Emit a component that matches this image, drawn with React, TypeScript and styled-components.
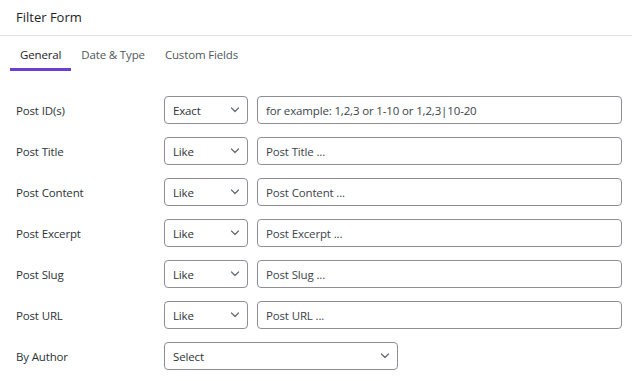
import React from "react";
import styled, { createGlobalStyle } from "styled-components";

const GlobalStyle = createGlobalStyle`
  html, body { margin: 0; padding: 0; background: #ffffff; }
  body { font-family: "Open Sans", "Noto Sans", sans-serif; color: #1d2327; }
  * { box-sizing: border-box; }
`;

const Panel = styled.div`
  width: 632px;
  background: #ffffff;
`;

const Header = styled.div`
  height: 36px;
  padding: 0 16px 2px;
  display: flex;
  align-items: center;
  border-bottom: 1px solid #e2e4e7;
  font-size: 13px;
  font-weight: 500;
  color: #1d2327;
`;

const TabBar = styled.div`
  display: flex;
  padding-left: 10px;
  height: 35px;
`;

const Tab = styled.div<{ $active?: boolean }>`
  padding: 5px 10px 0;
  display: flex;
  align-items: center;
  font-size: 11.5px;
  letter-spacing: -0.15px;
  font-weight: ${(p) => (p.$active ? 500 : 400)};
  color: ${(p) => (p.$active ? "#1d2327" : "#50575e")};
  border-bottom: 3px solid ${(p) => (p.$active ? "#6b3fd1" : "transparent")};
`;

const Form = styled.div`
  padding: 25px 10px 0 16px;
  display: flex;
  flex-direction: column;
  gap: 13px;
`;

const Row = styled.div<{ $wide?: boolean }>`
  display: grid;
  grid-template-columns: ${(p) => (p.$wide ? "148px 234px" : "148px 84px 1fr")};
  align-items: center;
  height: 28px;
`;

const Label = styled.div`
  font-size: 11.5px;
  letter-spacing: -0.15px;
  color: #2c3338;
`;

const SelectBox = styled.div`
  height: 28px;
  border: 1px solid #8c8f94;
  border-radius: 4px;
  display: flex;
  align-items: center;
  justify-content: space-between;
  padding: 0 7px 0 8px;
  font-size: 11.5px;
  letter-spacing: -0.15px;
  color: #2c3338;
  background: #fff;
`;

const TextInput = styled.input`
  height: 28px;
  margin-left: 9px;
  border: 1px solid #8c8f94;
  border-radius: 4px;
  padding: 0 8px;
  font-family: inherit;
  font-size: 11.5px;
  letter-spacing: -0.15px;
  color: #2c3338;
  background: #fff;
  outline: none;
  &::placeholder { color: #3c434a; opacity: 1; }
`;

const Chevron = () => (
  <svg width="10" height="6" viewBox="0 0 10 6" fill="none">
    <polyline points="1.5,1 5,4.5 8.5,1" stroke="#646970" strokeWidth="1.2" strokeLinecap="round" strokeLinejoin="round" />
  </svg>
);

const rows = [
  { label: "Post ID(s)", op: "Exact", ph: "for example: 1,2,3 or 1-10 or 1,2,3|10-20" },
  { label: "Post Title", op: "Like", ph: "Post Title ..." },
  { label: "Post Content", op: "Like", ph: "Post Content ..." },
  { label: "Post Excerpt", op: "Like", ph: "Post Excerpt ..." },
  { label: "Post Slug", op: "Like", ph: "Post Slug ..." },
  { label: "Post URL", op: "Like", ph: "Post URL ..." },
];

export default function App() {
  return (
    <Panel>
      <GlobalStyle />
      <Header>Filter Form</Header>
      <TabBar>
        <Tab $active>General</Tab>
        <Tab>Date &amp; Type</Tab>
        <Tab>Custom Fields</Tab>
      </TabBar>
      <Form>
        {rows.map((r) => (
          <Row key={r.label}>
            <Label>{r.label}</Label>
            <SelectBox>
              <span>{r.op}</span>
              <Chevron />
            </SelectBox>
            <TextInput placeholder={r.ph} />
          </Row>
        ))}
        <Row $wide>
          <Label>By Author</Label>
          <SelectBox>
            <span>Select</span>
            <Chevron />
          </SelectBox>
        </Row>
      </Form>
    </Panel>
  );
}
